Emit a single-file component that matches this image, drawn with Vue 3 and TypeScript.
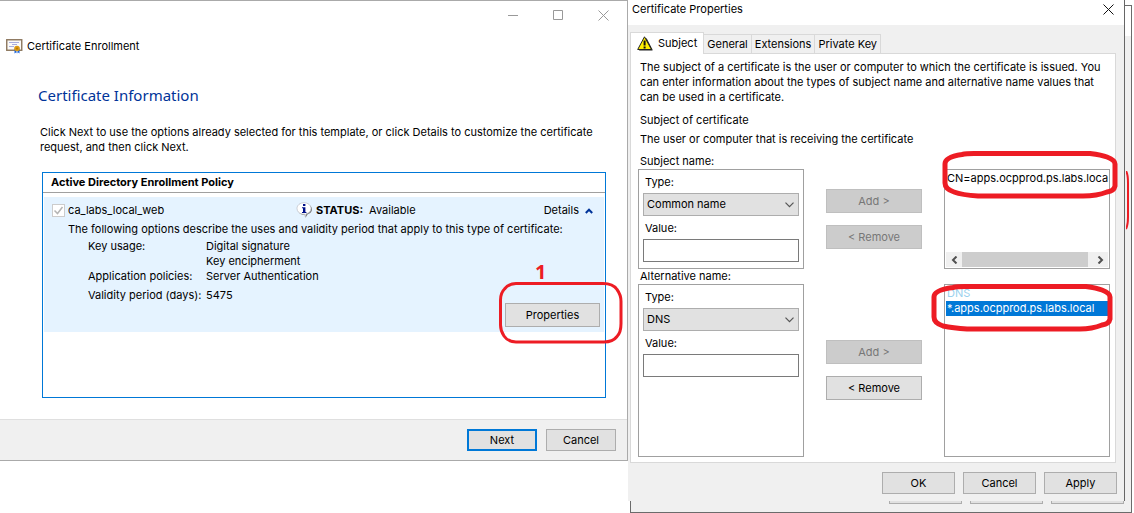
<script setup lang="ts">
import { ref } from 'vue'

interface NameGroup {
  id: string
  label: string
  type: string
  canRemove: boolean
  tall: boolean
}

const groups: NameGroup[] = [
  { id: 'subject', label: 'Subject name:', type: 'Common name', canRemove: false, tall: false },
  { id: 'alt', label: 'Alternative name:', type: 'DNS', canRemove: true, tall: true },
]
const values = ref<Record<string, string>>({ subject: '', alt: '' })
const tabs = ['Subject', 'General', 'Extensions', 'Private Key']
const activeTab = ref('Subject')
const dialogButtons = ['OK', 'Cancel', 'Apply']
</script>

<template>
  <main class="desktop">
    <section class="wizard">
      <div class="caption">
        <button class="cap" aria-label="Minimize">
          <svg width="11" height="11" viewBox="0 0 11 11"><path d="M0 5.5h10" /></svg>
        </button>
        <button class="cap" aria-label="Maximize">
          <svg width="11" height="11" viewBox="0 0 11 11"><path d="M.5 .5h9v9h-9z" /></svg>
        </button>
        <button class="cap" aria-label="Close">
          <svg width="11" height="11" viewBox="0 0 11 11"><path d="M.5 .5l10 10M10.500 .5l-10 10" /></svg>
        </button>
      </div>
      <header class="wizard-title">
        <svg class="cert" width="17" height="15" viewBox="0 0 17 15">
          <rect x=".75" y=".75" width="15" height="10.500" fill="#fbfaf8" stroke="#8b765c" stroke-width="1.400" />
          <path d="M3 3.500h10M6 5.500h5M3 7.500h5" stroke="#a9aede" />
          <path d="M8.500 10v4.500l1.500-1 .5 1V10zM11.500 10v4.500l.7-1 1.300 1V10z" fill="#1c62d8" />
          <circle cx="11" cy="9.500" r="2.800" fill="#dc9a12" />
          <circle cx="11" cy="9.500" r="1.100" fill="#b97908" />
        </svg>
        <span>Certificate Enrollment</span>
      </header>
      <h1>Certificate Information</h1>
      <p class="intro">
        Click Next to use the options already selected for this template, or click Details to customize the certificate<br />
        request, and then click Next.
      </p>
      <div class="policy">
        <h2>Active Directory Enrollment Policy</h2>
        <div class="template">
          <div class="template-head">
            <label class="check">
              <span class="box">
                <input type="checkbox" checked disabled />
                <svg width="13" height="13" viewBox="0 0 13 13"><path d="M2.500 6.500l3 3 5-6.500" /></svg>
              </span>
              ca_labs_local_web
            </label>
            <span class="status">
              <svg width="17" height="17" viewBox="0 0 17 17">
                <path d="M8.500 2C4.500 2 2 4.300 2 7.500c0 2.700 2 4.600 4.500 5.200h2.300l.7 3 2.200-3.400c2.600-.7 4.300-2.500 4.300-4.800C16 4.300 13 2 8.500 2z" fill="#777" />
                <path d="M8 .7C4 .7 1 3.200 1 6.500c0 2.900 2.200 5 5.200 5.600l2.600.1.500 2.700.8-3.100C13 11.200 15 9.200 15 6.500 15 3.200 12 .7 8 .7z" fill="#fff" stroke="#b9bcc4" stroke-width=".7" />
                <path d="M7 2h2.400v2H7zM6 5.300h3.400V10h1v1H6v-1h1V6.300H6z" fill="#00108a" />
              </svg>
              <b>STATUS:</b> <span>Available</span>
            </span>
            <button class="details">
              Details
              <svg width="8" height="6" viewBox="0 0 8 6"><path d="M.8 5L4 1.700 7.200 5" /></svg>
            </button>
          </div>
          <p class="describe">The following options describe the uses and validity period that apply to this type of certificate:</p>
          <dl>
            <dt>Key usage:</dt>
            <dd>Digital signature<br />Key encipherment</dd>
            <dt>Application policies:</dt>
            <dd>Server Authentication</dd>
            <dt class="validity">Validity period (days):</dt>
            <dd class="validity">5475</dd>
          </dl>
          <div class="properties">
            <button class="btn">Properties</button>
            <span class="step">1</span>
            <svg class="ring" width="124" height="62" viewBox="0 0 124 62">
              <path d="M17 1.500h87c7 0 12 3 14 6 3 4 4 7 4 12v22c0 6-1 10-4 13-3 4-8 5.500-13 5.500H17c-6 0-10-3-12-6-2-3-3.500-6-3.500-11V18c0-5 1-8 4-11 3-4 7-5.500 11.500-5.500z" stroke-width="3" />
            </svg>
          </div>
        </div>
      </div>
      <footer class="wizard-foot">
        <button class="btn primary">Next</button>
        <button class="btn">Cancel</button>
      </footer>
    </section>

    <div class="stack">
      <div class="behind">
        <div class="behind-title"></div>
        <svg class="mark" width="3" height="60" viewBox="0 0 3 60"><path d="M0 0c2 3 2 6 2 12v34c0 5 0 8-2 12" /></svg>
        <div class="behind-foot"><i v-for="b in dialogButtons" :key="b"></i></div>
      </div>

      <section class="dialog">
        <header class="dialog-title">
          <span>Certificate Properties</span>
          <button class="cap dark" aria-label="Close">
            <svg width="11" height="11" viewBox="0 0 11 11"><path d="M.5 .5l10 10M10.500 .5l-10 10" /></svg>
          </button>
        </header>
        <nav class="tabs" role="tablist">
          <button
            v-for="t in tabs"
            :key="t"
            role="tab"
            :aria-selected="t === activeTab"
            :class="['tab', { active: t === activeTab }]"
            @click="activeTab = t"
          >
            <svg v-if="t === 'Subject'" width="16" height="15" viewBox="0 0 16 15">
              <path d="M2 14.500h13.500v-1L9.500 2z" fill="#222" />
              <path d="M7.500 .8L.7 13.500h13.800z" fill="#ffee00" stroke="#222" stroke-linejoin="round" />
              <path d="M6.600 4.500h2v5h-2zM6.600 10.500h2v2h-2z" fill="#111" />
            </svg>
            {{ t }}
          </button>
        </nav>
        <div class="panel">
          <p>
            The subject of a certificate is the user or computer to which the certificate is issued. You<br />
            can enter information about the types of subject name and alternative name values that<br />
            can be used in a certificate.
          </p>
          <h3>Subject of certificate</h3>
          <p class="who">The user or computer that is receiving the certificate</p>
          <div v-for="g in groups" :key="g.id" :class="['names', { tall: g.tall }]">
            <h4>{{ g.label }}</h4>
            <div class="group">
              <label :for="g.id + '-type'">Type:</label>
              <div class="select">
                <select :id="g.id + '-type'"><option>{{ g.type }}</option></select>
                <svg width="9" height="6" viewBox="0 0 9 6"><path d="M.5 .7l4 4 4-4" /></svg>
              </div>
              <label class="value" :for="g.id + '-value'">Value:</label>
              <input :id="g.id + '-value'" v-model="values[g.id]" type="text" />
            </div>
            <div class="moves">
              <button class="btn" disabled>Add &gt;</button>
              <button class="btn" :disabled="!g.canRemove">&lt; Remove</button>
            </div>
            <div class="list">
              <template v-if="g.id === 'subject'">
                <div class="entry">CN=apps.ocpprod.ps.labs.loca</div>
                <div class="scroll">
                  <button aria-label="Scroll left">
                    <svg width="7" height="8" viewBox="0 0 7 8"><path d="M5.500 .5L2 4l3.500 3.500" /></svg>
                  </button>
                  <span class="thumb"></span>
                  <button aria-label="Scroll right">
                    <svg width="7" height="8" viewBox="0 0 7 8"><path d="M1.500 .5L5 4 1.500 7.500" /></svg>
                  </button>
                </div>
                <svg class="ring cn-ring" width="176" height="48" viewBox="0 0 176 48">
                  <path d="M20 3.500Q24 2.500 32 2.500H148Q160 4 165 6q8 3 8 7v22q-1 5-8 6-10 4-24 4H36Q20 44 12 41q-9-3-9-9V13Q3 6 20 3.500z" />
                </svg>
              </template>
              <template v-else>
                <div class="entry heading">DNS</div>
                <div class="entry chosen">*.apps.ocpprod.ps.labs.local</div>
                <svg class="ring dns-ring" width="183" height="48" viewBox="0 0 183 48">
                  <path d="M22 3.500Q26 2.500 34 2.500H155Q166 4 171 6q8 3 8 7v22q-1 5-8 6-10 4-22 4H36Q22 44 12 42q-9-3-9-9V13Q3 6 22 3.500z" />
                </svg>
              </template>
            </div>
          </div>
        </div>
        <footer class="dialog-foot">
          <button v-for="b in dialogButtons" :key="b" class="btn">{{ b }}</button>
        </footer>
      </section>
    </div>
  </main>
</template>

<style>
body {
  margin: 0;
  background: #fff;
}
</style>

<style scoped>
* {
  box-sizing: border-box;
}
.desktop {
  display: grid;
  grid-template-columns: minmax(0, 628fr) minmax(0, 506fr);
  align-items: start;
  overflow: hidden;
  font: 11px/15px Inter, 'Noto Sans', sans-serif;
  color: #000;
  white-space: nowrap;
}
h1, h2, h3, h4, p, dl, dd {
  margin: 0;
  font-size: inherit;
  font-weight: 400;
}
button, input, select {
  font: inherit;
  color: inherit;
  margin: 0;
}
svg {
  display: block;
  flex: none;
  fill: none;
}
.btn {
  height: 24px;
  padding: 0;
  border: 1px solid #adadad;
  border-radius: 0;
  background: #e1e1e1;
  text-align: center;
}
.btn:disabled {
  background: #ccc;
  border-color: #bfbfbf;
  color: #777;
}
.cap {
  border: 0;
  background: none;
  padding: 0;
}
.cap svg {
  stroke: #999;
}
.cap.dark svg {
  stroke: #111;
}

.wizard {
  border: 1px solid #aaa;
  border-left: 0;
}
.caption {
  display: flex;
  justify-content: flex-end;
  align-items: center;
  gap: 34px;
  height: 28px;
  padding-right: 18px;
}
.wizard-title {
  display: flex;
  align-items: center;
  gap: 4px;
  height: 16px;
  margin: 9px 0 0 6px;
}
h1 {
  margin: 30px 0 0 38px;
  font: 400 15px/22px 'Noto Sans', sans-serif;
  color: #039;
}
.intro {
  margin: 19px 0 0 40px;
}
.policy {
  height: 226px;
  margin: 17px 21px 21px 42px;
  border: 1px solid #0078d7;
}
h2 {
  height: 20px;
  padding: 2px 8px;
  border-bottom: 1px solid #a0a0a0;
  font-weight: 700;
}
.template {
  margin: 4px 1px 0;
  padding: 5px 4px 5px 8px;
  background: #e5f3ff;
}
.template-head {
  display: grid;
  grid-template-columns: minmax(0, 244fr) minmax(0, 236fr) minmax(0, 68fr);
  align-items: center;
  height: 15px;
}
.check {
  display: flex;
  align-items: center;
  gap: 3px;
}
.box {
  display: grid;
}
.box > * {
  grid-area: 1 / 1;
}
.box input {
  appearance: none;
  width: 13px;
  height: 13px;
  border: 1px solid #ccc;
  background: #fff;
}
.box svg {
  stroke: #b5b5b5;
  stroke-width: 1.500;
}
.status {
  display: flex;
  align-items: center;
  gap: 3px;
}
.status span {
  margin-left: 3px;
}
.details {
  display: flex;
  align-items: center;
  gap: 6px;
  padding: 0;
  margin-right: 7px;
  border: 0;
  background: none;
  justify-self: end;
}
.details svg {
  stroke: #039;
  stroke-width: 2;
}
.describe {
  margin: 5px 0 2px 16px;
}
dl {
  display: grid;
  grid-template-columns: 118px 1fr;
  margin-left: 36px;
}
.validity {
  margin-top: 4px;
}
.properties {
  position: relative;
  display: flex;
  width: 95px;
  margin-left: auto;
}
.properties .btn {
  flex: 1;
}
.ring {
  position: absolute;
  stroke: #ed1c24;
  stroke-width: 5;
  z-index: 2;
}
.properties .ring {
  left: -6px;
  top: -21px;
}
.step {
  position: absolute;
  left: 30px;
  top: -43px;
  font: 700 20px/24px 'Noto Sans', sans-serif;
  color: #ed1c24;
}
.wizard-foot {
  display: flex;
  justify-content: flex-end;
  gap: 9px;
  padding: 9px 11px;
  border-top: 1px solid #dfdfdf;
  background: #f0f0f0;
}
.wizard-foot .btn {
  width: 70px;
  height: 22px;
}
.wizard-foot .primary {
  border: 2px solid #0078d7;
}

.stack {
  position: relative;
  padding: 0 9px 12px 0;
}
.behind {
  position: absolute;
  inset: 5px 2px 0 2px;
  display: flex;
  flex-direction: column;
  justify-content: space-between;
  border: 1px solid #6b6b6b;
  background: #f0f0f0;
}
.behind-title {
  height: 30px;
  background: #fff;
}
.mark {
  position: absolute;
  right: 2px;
  top: 165px;
  stroke: #ed1c24;
  stroke-width: 2;
}
.behind-foot {
  display: flex;
  justify-content: flex-end;
  gap: 8px;
  padding: 0 7px 8px 0;
}
.behind-foot i {
  width: 73px;
  height: 22px;
  border: 1px solid #adadad;
  background: #e1e1e1;
}
.dialog {
  position: relative;
  border-right: 1px solid #666;
  background: #f0f0f0;
}
.dialog-title {
  display: flex;
  align-items: center;
  justify-content: space-between;
  height: 25px;
  padding: 0 10px 6px 4px;
  background: #fff;
}
.tabs {
  display: flex;
  align-items: flex-end;
  height: 28px;
  padding: 0 2px;
}
.tab {
  height: 19px;
  padding: 0 3px;
  border: 1px solid #d9d9d9;
  border-width: 1px 1px 0 0;
  background: #f0f0f0;
}
.tab.active {
  position: relative;
  display: flex;
  align-items: center;
  gap: 5px;
  height: 22px;
  margin-bottom: -1px;
  padding: 0 6px;
  border-left-width: 1px;
  background: #fff;
}
.panel {
  margin: 0 8px 0 2px;
  padding: 6px 5px 5px 7px;
  border: 1px solid #d9d9d9;
  background: #fff;
}
.panel > p, h3 {
  margin-left: 2px;
}
h3 {
  margin-top: 8px;
}
.panel > .who {
  margin: 4px 0 7px 2px;
}
.names {
  display: grid;
  grid-template-columns: minmax(0, 166fr) minmax(0, 96fr) minmax(0, 166fr);
  grid-template-rows: 15px 100px;
  column-gap: 22px;
}
.names.tall {
  grid-template-rows: 15px 173px;
}
h4 {
  grid-column: 1 / -1;
  padding-left: 2px;
}
.group {
  display: flex;
  flex-direction: column;
  gap: 3px;
  padding: 5px 4px;
  border: 1px solid #a0a0a0;
}
.group label {
  padding-left: 2px;
}
.group .value {
  margin-top: 2px;
}
.group input {
  width: 100%;
  height: 23px;
  padding: 2px 4px;
  border: 1px solid #7a7a7a;
  border-radius: 0;
}
.select {
  position: relative;
}
.select select {
  display: block;
  appearance: none;
  width: 100%;
  height: 23px;
  padding: 0 3px;
  border: 1px solid #adadad;
  border-radius: 0;
  background: #e1e1e1;
}
.select svg {
  position: absolute;
  right: 5px;
  top: 9px;
  stroke: #555;
  stroke-width: 1.200;
  pointer-events: none;
}
.moves {
  display: flex;
  flex-direction: column;
  gap: 12px;
  padding-top: 20px;
}
.tall .moves {
  padding-top: 56px;
}
.list {
  position: relative;
  display: flex;
  flex-direction: column;
  padding: 1px;
  border: 1px solid #a0a0a0;
}
.entry {
  height: 15px;
  padding-left: 1px;
}
.entry.heading {
  color: #99d1ee;
}
.entry.chosen {
  background: #0078d7;
  color: #fff;
}
.scroll {
  display: flex;
  height: 15px;
  margin-top: auto;
  background: #f0f0f0;
}
.scroll button {
  display: grid;
  place-items: center;
  width: 16px;
  padding: 0;
  border: 0;
  background: none;
}
.scroll svg {
  stroke: #505050;
  stroke-width: 2;
}
.thumb {
  flex: 1;
  margin-right: 4px;
  background: #cdcdcd;
}
.cn-ring {
  left: -3px;
  top: -19px;
}
.dns-ring {
  left: -14px;
  top: -1px;
}
.dialog-foot {
  display: flex;
  justify-content: flex-end;
  gap: 8px;
  padding: 9px 7px 7px 0;
}
.dialog-foot .btn {
  width: 73px;
  height: 22px;
}
</style>
